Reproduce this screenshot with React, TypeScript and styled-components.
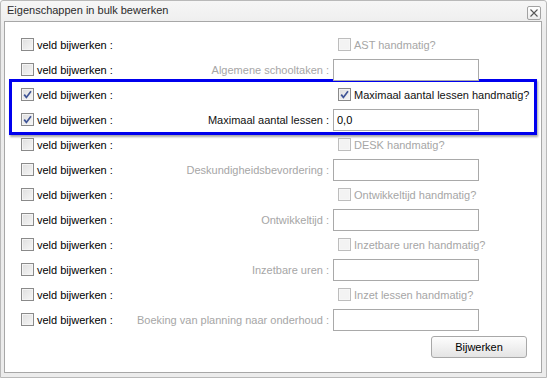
import React from "react";
import styled, { createGlobalStyle } from "styled-components";

type Field =
  | { kind: "check"; label: string; checked?: boolean; enabled?: boolean }
  | { kind: "input"; label: string; value?: string; enabled?: boolean };

const fields: Field[] = [
  { kind: "check", label: "AST handmatig?" },
  { kind: "input", label: "Algemene schooltaken :" },
  { kind: "check", label: "Maximaal aantal lessen handmatig?", checked: true, enabled: true },
  { kind: "input", label: "Maximaal aantal lessen :", value: "0,0", enabled: true },
  { kind: "check", label: "DESK handmatig?" },
  { kind: "input", label: "Deskundigheidsbevordering :" },
  { kind: "check", label: "Ontwikkeltijd handmatig?" },
  { kind: "input", label: "Ontwikkeltijd :" },
  { kind: "check", label: "Inzetbare uren handmatig?" },
  { kind: "input", label: "Inzetbare uren :" },
  { kind: "check", label: "Inzet lessen handmatig?" },
  { kind: "input", label: "Boeking van planning naar onderhoud :" },
];

const CheckMark = () => (
  <svg width="11" height="11" viewBox="0 0 11 11">
    <path d="M2.2 5.6 L4.4 8.4 L9 2.2" fill="none" stroke="#3f5496" strokeWidth="1.7" />
  </svg>
);

const Box = ({ checked, disabled }: { checked?: boolean; disabled?: boolean }) => (
  <CheckBox $disabled={disabled}>{checked && <CheckMark />}</CheckBox>
);

const Row = ({ field, update }: { field: Field; update: boolean }) => {
  const on = !!field.enabled;
  return (
    <RowWrap>
      <UpdatePart>
        <Box checked={update} />
        <span>veld bijwerken :</span>
      </UpdatePart>
      <FieldLabel $disabled={!on}>{field.kind === "input" ? field.label : ""}</FieldLabel>
      <Control>
        {field.kind === "input" ? (
          <TextBox value={field.value ?? ""} disabled={!on} readOnly />
        ) : (
          <CheckLine $disabled={!on}>
            <Box checked={field.checked} disabled={!on} />
            <span>{field.label}</span>
          </CheckLine>
        )}
      </Control>
    </RowWrap>
  );
};

export default function App() {
  return (
    <>
      <GlobalStyle />
      <Dialog>
        <TitleBar>
          <Title>Eigenschappen in bulk bewerken</Title>
          <CloseButton>
            <svg width="8" height="8" viewBox="0 0 8 8">
              <path d="M0.5 0.5 L7.5 7.5 M7.5 0.5 L0.5 7.5" stroke="#555" strokeWidth="1.1" />
            </svg>
          </CloseButton>
        </TitleBar>
        <Panel>
          <Row field={fields[0]} update={false} />
          <Row field={fields[1]} update={false} />
          <Highlight>
            <Row field={fields[2]} update={true} />
            <Row field={fields[3]} update={true} />
          </Highlight>
          {fields.slice(4).map((f, i) => (
            <Row key={i} field={f} update={false} />
          ))}
          <Footer>
            <SubmitButton>Bijwerken</SubmitButton>
          </Footer>
        </Panel>
      </Dialog>
    </>
  );
}

const GlobalStyle = createGlobalStyle`
  html, body {
    margin: 0;
    padding: 0;
    background: #ffffff;
  }
  body {
    font-family: "Liberation Sans", Arial, sans-serif;
    font-size: 11px;
  }
`;

const Dialog = styled.div`
  box-sizing: border-box;
  width: 547px;
  height: 378px;
  border: 1px solid #b9b9b9;
  border-radius: 3px 3px 0 0;
  background: linear-gradient(#f6f6f6, #ebebeb 30px, #ececec);
  padding: 0 4px 4px 3px;
  display: flex;
  flex-direction: column;
`;

const TitleBar = styled.div`
  height: 20px;
  display: flex;
  align-items: center;
  justify-content: space-between;
  padding: 0 1px 0 3px;
`;

const Title = styled.div`
  font-size: 11px;
  color: #2b2b2b;
  padding-bottom: 2px;
`;

const CloseButton = styled.div`
  box-sizing: border-box;
  width: 14px;
  height: 14px;
  margin-top: 3px;
  border: 1px solid #a2a2a2;
  border-radius: 2px;
  background: linear-gradient(#ffffff, #ececec);
  display: flex;
  align-items: center;
  justify-content: center;
`;

const Panel = styled.div`
  flex: 1;
  background: #ffffff;
  border: 1px solid #a7a7a7;
  padding: 10px 62px 0 16px;
`;

const Highlight = styled.div`
  margin: -3px -58px -3px -12px;
  padding: 0 55px 0 9px;
  border: 3px solid #0000ee;
  box-shadow: 1px 2px 2px rgba(0, 0, 0, 0.35);
`;

const RowWrap = styled.div`
  height: 25px;
  display: flex;
  align-items: center;
  color: #000000;
`;

const UpdatePart = styled.div`
  width: 120px;
  display: flex;
  align-items: center;
  gap: 3px;
  white-space: nowrap;
`;

const FieldLabel = styled.div<{ $disabled?: boolean }>`
  flex: 1;
  text-align: right;
  padding-right: 4px;
  white-space: nowrap;
  color: ${(p) => (p.$disabled ? "#a6a6a6" : "#111111")};
`;

const Control = styled.div`
  width: 146px;
  display: flex;
  align-items: center;
`;

const CheckLine = styled.div<{ $disabled?: boolean }>`
  display: flex;
  align-items: center;
  gap: 3px;
  padding-left: 5px;
  white-space: nowrap;
  color: ${(p) => (p.$disabled ? "#a6a6a6" : "#111111")};
`;

const CheckBox = styled.span<{ $disabled?: boolean }>`
  box-sizing: border-box;
  width: 13px;
  height: 13px;
  flex: none;
  display: flex;
  align-items: center;
  justify-content: center;
  border: 1px solid ${(p) => (p.$disabled ? "#bdbdbd" : "#8a8a8a")};
  background: ${(p) =>
    p.$disabled ? "#f3f3f3" : "linear-gradient(135deg, #dedede, #f6f6f6)"};
  box-shadow: inset 0 0 0 1px ${(p) => (p.$disabled ? "#f7f7f7" : "#f4f4f4")};
`;

const TextBox = styled.input`
  box-sizing: border-box;
  width: 146px;
  height: 22px;
  margin: 0;
  border: 1px solid #a9a9a9;
  background: #ffffff;
  padding: 0 3px;
  font-family: "Liberation Sans", Arial, sans-serif;
  font-size: 11px;
  color: #000000;
  outline: none;
`;

const Footer = styled.div`
  display: flex;
  justify-content: flex-end;
  padding-top: 4px;
  margin-right: -48px;
`;

const SubmitButton = styled.button`
  box-sizing: border-box;
  width: 96px;
  height: 22px;
  border: 1px solid #a8a8a8;
  border-radius: 3px;
  background: linear-gradient(#fdfdfd, #e4e4e4);
  font-family: "Liberation Sans", Arial, sans-serif;
  font-size: 11px;
  color: #000000;
  padding: 0;
`;
